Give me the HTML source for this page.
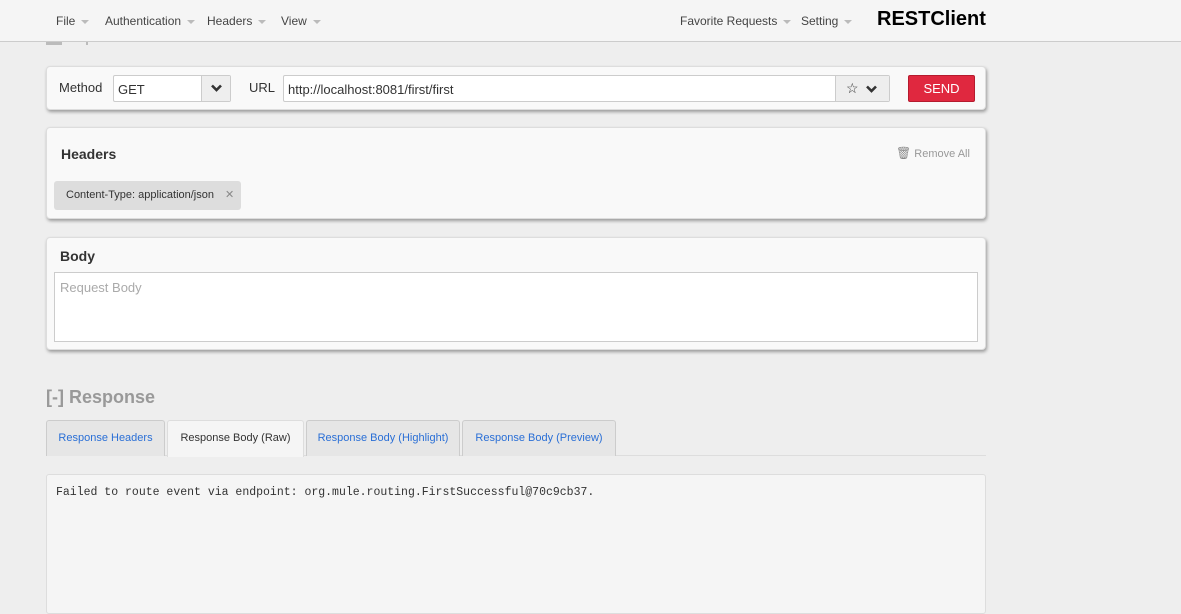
<!DOCTYPE html>
<html><head><style>
*{box-sizing:border-box;margin:0;padding:0}
body{width:1181px;height:599px;overflow:hidden;background:#eee;font-family:"Liberation Sans",sans-serif;font-size:12px;color:#333;position:relative}
.nav{position:absolute;left:0;top:0;width:1181px;height:42px;background:#f5f5f5;border-bottom:1px solid #ccc}
.nav span{position:absolute;top:14px;font-size:12px;color:#444}
.car{display:inline-block;width:0;height:0;border-left:4px solid transparent;border-right:4px solid transparent;border-top:4px solid #bbb;margin-left:6px;vertical-align:middle}
.brand{position:absolute;left:877px;top:8px;font-size:20px;font-weight:bold;color:#000}
.panel{position:absolute;left:46px;width:940px;background:#f9f9f9;border:1px solid #ddd;border-radius:4px;box-shadow:1px 2px 3px rgba(0,0,0,.35)}
.abs{position:absolute}
</style></head><body>
<div class="nav">
<span style="left:56px">File<i class="car"></i></span>
<span style="left:105px">Authentication<i class="car"></i></span>
<span style="left:207px">Headers<i class="car"></i></span>
<span style="left:281px">View<i class="car"></i></span>
<span style="left:680px">Favorite Requests<i class="car"></i></span>
<span style="left:801px">Setting<i class="car"></i></span>
<div class="brand">RESTClient</div>
</div>
<div class="abs" style="left:46px;top:42px;width:16px;height:3px;background:#bbb"></div>
<div class="abs" style="left:86px;top:42px;width:2px;height:3px;background:#bbb"></div>

<div class="panel" style="top:66px;height:44px">
<div class="abs" style="left:12px;top:13px;font-size:13px">Method</div>
<div class="abs" style="left:66px;top:8px;width:118px;height:27px;background:#fff;border:1px solid #ccc;border-radius:2px"><div class="abs" style="left:4px;top:6px;font-size:13px">GET</div><div class="abs" style="right:0;top:0;width:29px;height:25px;background:#eee;border-left:1px solid #ccc;text-align:center;line-height:25px"><svg width="11" height="8" viewBox="0 0 11 8"><path d="M1 1.5L5.5 6 10 1.5" stroke="#333" stroke-width="2.6" fill="none"/></svg></div></div>
<div class="abs" style="left:202px;top:13px;font-size:13px">URL</div>
<div class="abs" style="left:236px;top:8px;width:607px;height:27px;background:#fff;border:1px solid #ccc;border-radius:2px"><div class="abs" style="left:4px;top:6px;font-size:13px">http://localhost:8081/first/first</div><div class="abs" style="right:0;top:0;width:54px;height:25px;background:#eee;border-left:1px solid #ccc;font-size:14px;line-height:25px;padding-left:10px">☆ <svg width="11" height="8" viewBox="0 0 11 8" style="margin-left:4px"><path d="M1 1.5L5.5 6 10 1.5" stroke="#333" stroke-width="2.6" fill="none"/></svg></div></div>
<div class="abs" style="left:861px;top:8px;width:67px;height:27px;background:#e0283f;border:1px solid #b51b2e;border-radius:2px;color:#fff;text-align:center;line-height:25px;font-size:13px">SEND</div>
</div>

<div class="panel" style="top:127px;height:92px">
<div class="abs" style="left:14px;top:18px;font-size:14px;font-weight:bold">Headers</div>
<div class="abs" style="left:849px;top:18px;color:#999;font-size:11px"><span style="font-size:12px;color:#888">🗑</span> Remove All</div>
<div class="abs" style="left:7px;top:53px;width:187px;height:29px;background:#ddd;border-radius:3px;font-size:11px;line-height:29px;padding-left:12px">Content-Type: application/json <span style="color:#888;margin-left:8px">✕</span></div>
</div>

<div class="panel" style="top:237px;height:113px">
<div class="abs" style="left:13px;top:10px;font-size:14px;font-weight:bold">Body</div>
<div class="abs" style="left:7px;top:34px;width:924px;height:70px;background:#fff;border:1px solid #ccc"><div class="abs" style="left:5px;top:7px;color:#aaa;font-size:13px">Request Body</div></div>
</div>

<div class="abs" style="left:46px;top:387px;font-size:18px;font-weight:bold;color:#999">[-] Response</div>
<div class="abs" style="left:46px;top:455px;width:940px;height:1px;background:#ddd"></div>
<div class="abs" style="left:46px;top:420px;width:119px;height:36px;background:#e6e6e6;border:1px solid #ccc;border-bottom:none;border-radius:3px 3px 0 0;color:#2a6fd6;font-size:11px;text-align:center;line-height:34px">Response Headers</div>
<div class="abs" style="left:167px;top:420px;width:137px;height:37px;background:#f5f5f5;border:1px solid #ddd;border-bottom:none;border-radius:3px 3px 0 0;color:#333;font-size:11px;text-align:center;line-height:34px">Response Body (Raw)</div>
<div class="abs" style="left:306px;top:420px;width:154px;height:36px;background:#e6e6e6;border:1px solid #ccc;border-bottom:none;border-radius:3px 3px 0 0;color:#2a6fd6;font-size:11px;text-align:center;line-height:34px">Response Body (Highlight)</div>
<div class="abs" style="left:462px;top:420px;width:154px;height:36px;background:#e6e6e6;border:1px solid #ccc;border-bottom:none;border-radius:3px 3px 0 0;color:#2a6fd6;font-size:11px;text-align:center;line-height:34px">Response Body (Preview)</div>
<div class="abs" style="left:46px;top:474px;width:940px;height:140px;background:#f5f5f5;border:1px solid #ddd;border-radius:3px"><div class="abs" style="left:9px;top:11px;font-family:'Liberation Mono',monospace;font-size:11.5px">Failed to route event via endpoint: org.mule.routing.FirstSuccessful@70c9cb37.</div></div>
</body></html>
